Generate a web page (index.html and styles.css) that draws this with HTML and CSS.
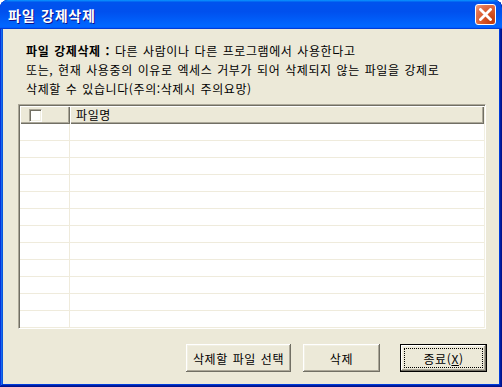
FILE: index.html
```html
<!DOCTYPE html>
<html lang="ko">
<head>
  <meta charset="UTF-8" />
  <title>파일 강제삭제</title>
  <link rel="stylesheet" href="styles.css">
</head>
<body>
  <div class="window">
    <div class="title-bar">
      <span class="title">파일 강제삭제</span>
      <button class="close-btn" aria-label="닫기">
        <svg width="13" height="13" viewBox="0 0 13 13">
          <path d="M1.5 1.5 L11.5 11.5 M11.5 1.5 L1.5 11.5" stroke="#fff" stroke-width="2.8" stroke-linecap="square" fill="none"/>
        </svg>
      </button>
    </div>

    <div class="client">
      <p class="desc"><b>파일 강제삭제 :</b> 다른 사람이나 다른 프로그램에서 사용한다고<br>또는, 현재 사용중의 이유로 엑세스 거부가 되어 삭제되지 않는 파일을 강제로<br>삭제할 수 있습니다(주의:삭제시 주의요망)</p>

      <div class="list">
        <div class="list-head">
          <div class="head-check"><span class="checkbox"></span></div>
          <div class="head-name">파일명</div>
        </div>
        <div class="list-body" id="listBody"></div>
      </div>

      <div class="buttons">
        <button class="btn btn-select">삭제할 파일 선택</button>
        <button class="btn btn-delete">삭제</button>
        <button class="btn btn-close default">종료(<u>X</u>)</button>
      </div>
    </div>
  </div>

  <script>
    // empty grid rows of the file list
    const body = document.getElementById('listBody');
    for (let i = 0; i < 12; i++) {
      const row = document.createElement('div');
      row.className = 'row';
      row.innerHTML = '<div class="cell-check"></div><div class="cell-name"></div>';
      body.appendChild(row);
    }
  </script>
</body>
</html>
```

FILE: styles.css
```css
* {
  margin: 0;
  padding: 0;
  box-sizing: border-box;
}

body {
  background: #fff;
  font-family: "Noto Sans CJK KR", sans-serif;
  font-size: 12px;
  letter-spacing: 0.6px;
  word-spacing: 0.9px;
  color: #000;
}

.window {
  width: 502px;
  height: 387px;
  display: flex;
  flex-direction: column;
  border-radius: 8px 8px 0 0;
  background: #0842d8;
  box-shadow: inset -1px -1px #00138c, inset 1px 1px #0831d9,
              inset -2px -2px #001ea0, inset 2px 2px #166aee,
              inset -3px -3px #003bda, inset 3px 3px #0855dd;
  overflow: hidden;
}

.title-bar {
  height: 29px;
  flex-shrink: 0;
  display: flex;
  align-items: center;
  justify-content: space-between;
  padding: 0 6px 0 8px;
  border-radius: 8px 8px 0 0;
  background: linear-gradient(180deg, #0997ff, #0053ee 8%, #0050ee 40%, #0066ff 88%, #0066ff 93%, #005bff 95%, #003dd7 96%, #003dd7);
}

.title {
  color: #fff;
  font-weight: bold;
  font-size: 14px;
  letter-spacing: 0.8px;
  text-shadow: 1px 1px #0f1089;
}

.close-btn {
  width: 21px;
  height: 21px;
  display: flex;
  align-items: center;
  justify-content: center;
  border: 1px solid #fff;
  border-radius: 3px;
  background: radial-gradient(circle at 85% 85%, #c23a0c 0%, #d9582a 45%, #e47450 75%, #f3a98c 100%);
}

.client {
  flex: 1;
  margin: 0 3px 3px 3px;
  background: #ece9d8;
  display: flex;
  flex-direction: column;
}

.desc {
  margin-top: 12px;
  padding-left: 23px;
  line-height: 19px;
  white-space: nowrap;
}

.list {
  margin: 6px 13px 0 15px;
  height: 225px;
  display: flex;
  flex-direction: column;
  background: #fff;
  border-style: solid;
  border-width: 1px;
  border-color: #aca899 #fff #fff #aca899;
  box-shadow: inset 1px 1px #716f64, inset -1px -1px #f1efe2;
  padding: 1px;
  overflow: hidden;
}

.list-head {
  display: flex;
  height: 18px;
  flex-shrink: 0;
}

.head-check,
.head-name {
  background: #ece9d8;
  box-shadow: inset 1px 1px #fff, inset -1px -1px #716f64, inset -2px -2px #aca899;
}

.head-check {
  width: 50px;
  padding: 3px 0 0 9px;
}

.head-name {
  flex: 1;
  padding-left: 6px;
  line-height: 18px;
}

.checkbox {
  display: block;
  width: 13px;
  height: 13px;
  background: #fff;
  border-style: solid;
  border-width: 1px;
  border-color: #aca899 #fff #fff #aca899;
  box-shadow: inset 1px 1px #716f64, inset -1px -1px #f1efe2;
}

.row {
  display: flex;
  height: 17px;
  border-bottom: 1px solid #efebdc;
}

.cell-check {
  width: 50px;
  border-right: 1px solid #efebdc;
}

.cell-name {
  flex: 1;
}

.buttons {
  display: flex;
  justify-content: flex-end;
  margin-top: 15px;
  padding-right: 12px;
}

.btn {
  height: 28px;
  font-family: "Noto Sans CJK KR", sans-serif;
  font-size: 12px;
  letter-spacing: 0.6px;
  word-spacing: 0.9px;
  background: #ece9d8;
  border: none;
  box-shadow: inset -1px -1px #716f64, inset 1px 1px #fff,
              inset -2px -2px #aca899, inset 2px 2px #f1efe2;
  position: relative;
}

.btn-select {
  width: 105px;
}

.btn-delete {
  width: 77px;
  margin-left: 12px;
}

.btn-close {
  width: 87px;
  margin-left: 20px;
}

.default {
  box-shadow: inset 0 0 0 1px #000, inset -2px -2px #716f64, inset 2px 2px #fff,
              inset -3px -3px #aca899, inset 3px 3px #f1efe2;
}

.default::after {
  content: "";
  position: absolute;
  top: 4px;
  left: 4px;
  right: 4px;
  bottom: 4px;
  border: 1px dotted #000;
}
```
